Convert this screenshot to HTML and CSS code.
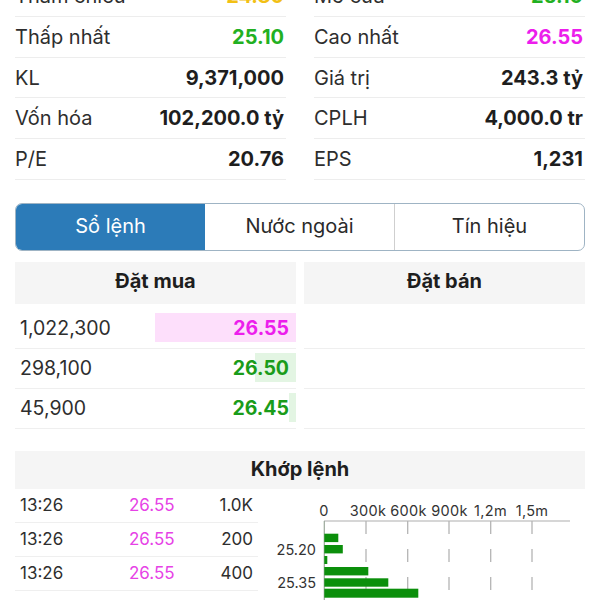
FILE: index.html
```html
<!DOCTYPE html>
<html lang="vi">
<head>
<meta charset="utf-8">
<title>Sổ lệnh</title>
<link rel="stylesheet" href="styles.css">
</head>
<body>
<div class="page">
  <div class="stats">
    <div class="stat"><span class="lbl">Tham chiếu</span><span class="val yellow">24.80</span></div>
    <div class="stat"><span class="lbl">Mở cửa</span><span class="val green">25.10</span></div>
    <div class="stat"><span class="lbl">Thấp nhất</span><span class="val green">25.10</span></div>
    <div class="stat"><span class="lbl">Cao nhất</span><span class="val magenta">26.55</span></div>
    <div class="stat"><span class="lbl">KL</span><span class="val">9,371,000</span></div>
    <div class="stat"><span class="lbl">Giá trị</span><span class="val">243.3 tỷ</span></div>
    <div class="stat"><span class="lbl">Vốn hóa</span><span class="val">102,200.0 tỷ</span></div>
    <div class="stat"><span class="lbl">CPLH</span><span class="val">4,000.0 tr</span></div>
    <div class="stat"><span class="lbl">P/E</span><span class="val">20.76</span></div>
    <div class="stat"><span class="lbl">EPS</span><span class="val">1,231</span></div>
  </div>

  <div class="tabs">
    <div class="tab active">Sổ lệnh</div>
    <div class="tab">Nước ngoài</div>
    <div class="tab">Tín hiệu</div>
  </div>

  <div class="book">
    <div class="book-col">
      <div class="book-head">Đặt mua</div>
      <div class="book-rows">
        <div class="brow"><span class="bar pink" style="width:50.2%"></span><span class="qty">1,022,300</span><span class="price magenta">26.55</span></div>
        <div class="brow"><span class="bar lgreen" style="width:14.6%"></span><span class="qty">298,100</span><span class="price dgreen">26.50</span></div>
        <div class="brow"><span class="bar lgreen" style="width:2.5%"></span><span class="qty">45,900</span><span class="price dgreen">26.45</span></div>
      </div>
    </div>
    <div class="book-col">
      <div class="book-head">Đặt bán</div>
      <div class="book-rows">
        <div class="brow"></div>
        <div class="brow"></div>
        <div class="brow"></div>
      </div>
    </div>
  </div>

  <div class="match-head">Khớp lệnh</div>
  <div class="match-body">
    <div class="mtable">
      <div class="mrow"><span>13:26</span><span class="mprice">26.55</span><span class="mvol">1.0K</span></div>
      <div class="mrow"><span>13:26</span><span class="mprice">26.55</span><span class="mvol">200</span></div>
      <div class="mrow"><span>13:26</span><span class="mprice">26.55</span><span class="mvol">400</span></div>
    </div>
    <svg class="chart" width="315" height="112" viewBox="0 0 315 112">
      <g class="xlabels">
        <text x="54" y="27">0</text>
        <text x="98" y="27">300k</text>
        <text x="138.5" y="27">600k</text>
        <text x="179.5" y="27">900k</text>
        <text x="220.5" y="27">1,2m</text>
        <text x="262" y="27">1,5m</text>
      </g>
      <line x1="54" y1="32" x2="300" y2="32" stroke="#c9c9c9" stroke-width="1.6"/>
      <g stroke="#b4b4b4" stroke-width="1.3" stroke-dasharray="13 15">
        <line x1="96" y1="32" x2="96" y2="112"/>
        <line x1="137.7" y1="32" x2="137.7" y2="112"/>
        <line x1="179" y1="32" x2="179" y2="112"/>
        <line x1="220.7" y1="32" x2="220.7" y2="112"/>
        <line x1="262" y1="32" x2="262" y2="112"/>
      </g>
      <line x1="54.3" y1="32" x2="54.3" y2="112" stroke="#9aa89a" stroke-width="1.2"/>
      <g fill="#0b8f0b">
        <rect x="54.3" y="44.7" width="14" height="8.4"/>
        <rect x="54.3" y="56" width="18.5" height="8.4"/>
        <rect x="54.3" y="67" width="3" height="8"/>
        <rect x="54.3" y="78" width="44" height="8.4"/>
        <rect x="54.3" y="89.3" width="64" height="8.4"/>
        <rect x="54.3" y="99.7" width="94" height="9"/>
        <rect x="54.3" y="111" width="62.5" height="9"/>
      </g>
      <g class="ylabels">
        <text x="46" y="66.3">25.20</text>
        <text x="46" y="98.7">25.35</text>
      </g>
    </svg>
  </div>
</div>
</body>
</html>
```
FILE: styles.css
```css
html, body {
  margin: 0;
  padding: 0;
  background: #fff;
  overflow: hidden;
}
body {
  font-family: Inter, "Noto Sans", sans-serif;
  color: #222;
}
.page {
  padding: 0 15px;
}

/* stats */
.stats {
  display: grid;
  grid-template-columns: 1fr 1fr;
  column-gap: 28px;
  margin-top: -23.4px;
}
.stat {
  height: 40.6px;
  box-sizing: border-box;
  border-bottom: 1px solid #ededed;
  display: flex;
  align-items: center;
  justify-content: space-between;
  font-size: 20px;
  padding-right: 2px;
}
.lbl {
  color: #2e2e2e;
}
.val {
  font-weight: 700;
  color: #1e1e1e;
}
.yellow { color: #f2c014; }
.green { color: #22b022; }
.magenta { color: #ec1eec; }
.dgreen { color: #1a9c1a; }

/* tabs */
.tabs {
  display: flex;
  margin-top: 23px;
  height: 48px;
  box-sizing: border-box;
  border: 1px solid #9fb4c4;
  border-radius: 7px;
  overflow: hidden;
}
.tab {
  flex: 1;
  display: flex;
  align-items: center;
  justify-content: center;
  font-size: 20px;
  color: #2a2a2a;
  border-left: 1px solid #cfcfcf;
  padding-bottom: 1px;
}
.tab.active {
  background: #2c7bb8;
  color: #fff;
  border-left: none;
}
.tab.active + .tab {
  border-left: none;
}

/* order book */
.book {
  display: grid;
  grid-template-columns: 1fr 1fr;
  column-gap: 8px;
  margin-top: 11px;
}
.book-head {
  height: 42px;
  box-sizing: border-box;
  padding-bottom: 3px;
  background: #f5f5f5;
  font-weight: 700;
  font-size: 20px;
  display: flex;
  align-items: center;
  justify-content: center;
  color: #1e1e1e;
}
.book-rows {
  margin-top: 5px;
}
.brow {
  position: relative;
  height: 40px;
  box-sizing: border-box;
  border-bottom: 1px solid #efefef;
  display: flex;
  align-items: center;
  justify-content: space-between;
  padding: 0 7px 0 5px;
  font-size: 19.5px;
}
.bar {
  position: absolute;
  right: 0;
  top: 4px;
  bottom: 6px;
}
.bar.pink { background: #fddffb; }
.bar.lgreen { background: #e3f5e3; }
.qty, .price {
  position: relative;
}
.qty { color: #2e2e2e; }
.price { font-weight: 700; }

/* match */
.match-head {
  margin-top: 22px;
  height: 38px;
  box-sizing: border-box;
  padding-bottom: 2px;
  background: #f5f5f5;
  font-weight: 700;
  font-size: 20px;
  display: flex;
  align-items: center;
  justify-content: center;
  color: #1e1e1e;
}
.match-body {
  display: flex;
  align-items: flex-start;
}
.mtable {
  width: 243px;
}
.mrow {
  height: 34px;
  box-sizing: border-box;
  border-bottom: 1px solid #efefef;
  display: grid;
  grid-template-columns: 109px 1fr auto;
  align-items: center;
  padding: 0 5px 0 5px;
  font-size: 17px;
  color: #2e2e2e;
}
.mprice {
  color: #e642e6;
}
.mvol {
  text-align: right;
}
.chart {
  display: block;
  margin-left: 12px;
  flex: none;
}
.xlabels text {
  font-family: Inter, "Noto Sans", sans-serif;
  font-size: 14.5px;
  fill: #333;
  text-anchor: middle;
  letter-spacing: 0.3px;
}
.ylabels text {
  font-family: Inter, "Noto Sans", sans-serif;
  font-size: 14.5px;
  fill: #333;
  text-anchor: end;
}
```
